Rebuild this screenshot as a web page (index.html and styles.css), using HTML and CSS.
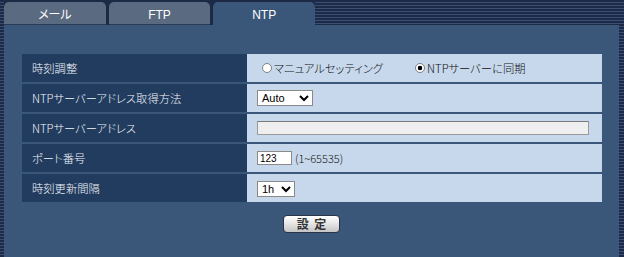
FILE: index.html
```html
<!DOCTYPE html>
<html lang="ja">
<head>
    <meta charset="UTF-8">
    <title>NTP設定</title>
    <link rel="stylesheet" href="styles.css">
</head>
<body>
    <div class="page">
        <!-- Tab bar -->
        <div class="tabs">
            <div class="tab">メール</div>
            <div class="tab">FTP</div>
            <div class="tab active">NTP</div>
        </div>

        <div class="panel">
            <div class="form">
                <div class="row">
                    <div class="label">時刻調整</div>
                    <div class="value">
                        <label class="radio"><input type="radio" name="mode">マニュアルセッティング</label>
                        <label class="radio"><input type="radio" name="mode" checked>NTPサーバーに同期</label>
                    </div>
                </div>
                <div class="row">
                    <div class="label">NTPサーバーアドレス取得方法</div>
                    <div class="value">
                        <select class="select select-auto">
                            <option>Auto</option>
                            <option>Manual</option>
                        </select>
                    </div>
                </div>
                <div class="row">
                    <div class="label">NTPサーバーアドレス</div>
                    <div class="value">
                        <input type="text" class="text-wide" disabled>
                    </div>
                </div>
                <div class="row">
                    <div class="label">ポート番号</div>
                    <div class="value">
                        <input type="text" class="text-port" value="123">
                        <span class="hint">(1~65535)</span>
                    </div>
                </div>
                <div class="row">
                    <div class="label">時刻更新間隔</div>
                    <div class="value">
                        <select class="select select-interval">
                            <option>1h</option>
                            <option>2h</option>
                            <option>3h</option>
                        </select>
                    </div>
                </div>
            </div>

            <div class="actions">
                <button class="btn">設&nbsp;&nbsp;定</button>
            </div>
        </div>
    </div>
</body>
</html>
```

FILE: styles.css
```css
* {
    margin: 0;
    padding: 0;
    box-sizing: border-box;
}

body {
    font-family: "Noto Sans CJK JP", "Liberation Sans", sans-serif;
    font-size: 11.3px;
    font-weight: 300;
    font-feature-settings: "palt";
    background: repeating-linear-gradient(to bottom, #1c2a47 0, #1c2a47 2px, #3a5072 2px, #3a5072 3px);
    height: 257px;
    overflow: hidden;
}

.page {
    padding: 0 5px 0 4px;
}

/* Tabs */
.tabs {
    display: flex;
    gap: 3px;
    width: 311px;
    height: 25px;
    padding-top: 2px;
    background: #1c2a45;
}

.tab {
    width: 102px;
    height: 23px;
    padding-top: 4px;
    background: #5a6a80;
    border-radius: 5px 5px 0 0;
    border-bottom: 1px solid #2a3c58;
    color: #fff;
    text-align: center;
    line-height: 19px;
    font-family: "Liberation Sans", "Noto Sans CJK JP", sans-serif;
    font-size: 12px;
    font-weight: 400;
}

.tab.active {
    background: #3a5779;
    border-bottom: none;
}

/* Main panel */
.panel {
    background: #3a5779;
    height: 232px;
    padding-top: 29px;
}

.form {
    display: flex;
    flex-direction: column;
    gap: 2px;
    margin: 0 17px 0 18px;
}

.row {
    display: grid;
    grid-template-columns: 225px 1fr;
    height: 28px;
}

.label {
    background: #213c5f;
    color: #f2f5f9;
    padding-left: 10px;
    display: flex;
    align-items: center;
}

.value {
    background: #c7d8ec;
    padding-left: 10px;
    display: flex;
    align-items: center;
    color: #111;
}

.radio {
    display: flex;
    align-items: center;
    margin-right: 27px;
}

.radio input {
    appearance: none;
    width: 10px;
    height: 10px;
    margin: 0 2px 0 5px;
    border: 1px solid #808080;
    border-radius: 50%;
    background: #fff;
}

.radio input:checked {
    background: radial-gradient(circle, #000 0, #000 2px, #fff 2.6px);
}

.select {
    height: 16px;
    font-family: "Liberation Sans", Arial, sans-serif;
    font-size: 11px;
    background: #fff;
    border: 1px solid #8a8a8a;
    color: #000;
}

.select-auto {
    width: 56px;
}

.select-interval {
    width: 38px;
    margin-top: 2px;
}

.text-wide {
    width: 332px;
    height: 14px;
    background: #efefef;
    border: 1px solid #9a9a9a;
    border-top-color: #7a7a7a;
}

.text-port {
    width: 35px;
    height: 14px;
    background: #fff;
    border: 1px solid #8a8a8a;
    font-family: "Liberation Sans", Arial, sans-serif;
    font-size: 10px;
    padding-left: 2px;
    color: #000;
}

.hint {
    margin-left: 3px;
    font-size: 11px;
}

/* Submit */
.actions {
    margin-top: 13px;
    text-align: center;
}

.btn {
    width: 57px;
    height: 18px;
    font-family: "Noto Sans CJK JP", sans-serif;
    font-size: 12px;
    font-weight: bold;
    color: #333;
    background: linear-gradient(to bottom, #ffffff, #e4e4e4 50%, #c4c4c4);
    border: 1px solid #2a3345;
    border-radius: 4px;
    line-height: 16px;
}
```
